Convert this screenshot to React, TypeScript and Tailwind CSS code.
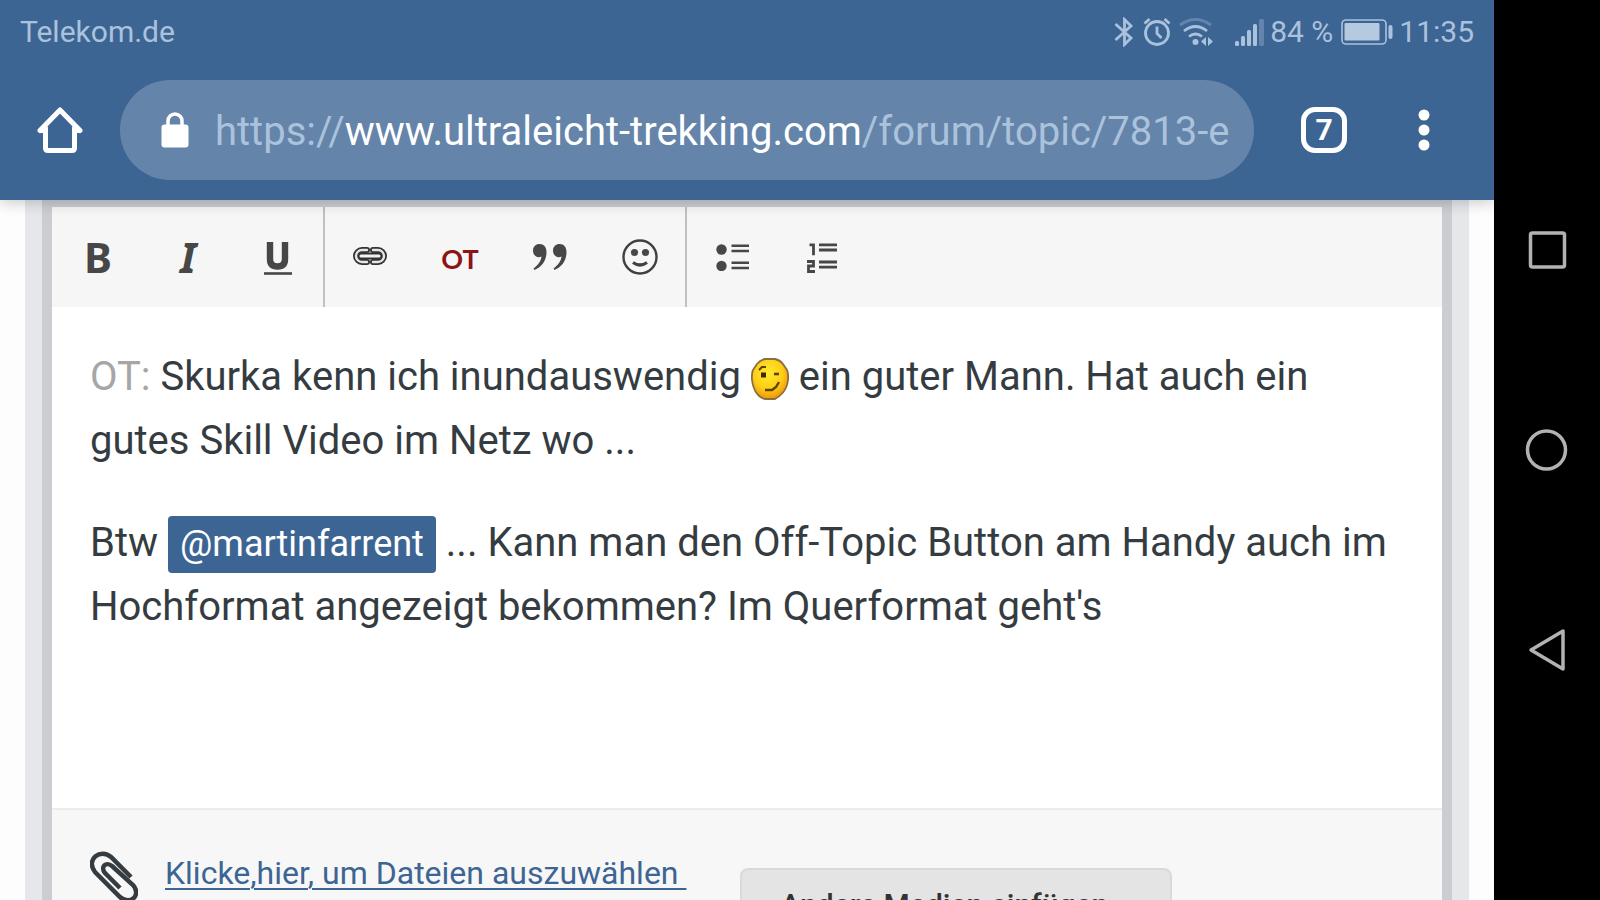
import type { ReactNode } from "react";

function StatusBar() {
  return (
    <div className="flex h-[62px] items-center justify-between px-5 pt-px text-[30px] leading-none text-[#abc2dc]">
      <span>Telekom.de</span>
      <div className="flex items-center">
        <svg width="20" height="30" viewBox="0 0 20 30" fill="none" stroke="currentColor" strokeWidth="2.8" aria-label="Bluetooth">
          <path d="M1.500 7 17 21 10.500 27.500V2.500L17 9 1.500 23" />
        </svg>
        <svg className="ml-2" width="30" height="30" viewBox="0 0 30 30" fill="none" stroke="currentColor" strokeWidth="2.8" aria-label="Wecker">
          <circle cx="15" cy="16" r="11.5" />
          <path d="M15 9.500v7l4.500 4.500M2.500 6.500 7.500 2M27.500 6.500 22.500 2" />
        </svg>
        <svg className="ml-1.5" width="36" height="30" viewBox="0 0 36 30" fill="none" stroke="currentColor" strokeWidth="2.8" aria-label="WLAN">
          <path d="M2 8q15.500-11 31 0" opacity=".35" />
          <path d="M6 14q11.500-9 23 0M11 19.500q6.500-5 13 0" />
          <circle cx="17.500" cy="25" r="3" fill="currentColor" stroke="none" />
          <path d="M28 20v9l-5-4.500zM30 20v9l5-4.500z" fill="currentColor" stroke="none" />
        </svg>
        <svg className="ml-5" width="30" height="28" viewBox="0 0 30 28" fill="currentColor" aria-label="Mobilfunk">
          <rect x="1" y="23" width="4" height="5" rx="1.5" />
          <rect x="7" y="18" width="4" height="10" rx="1.5" />
          <rect x="13" y="12" width="4" height="16" rx="1.5" />
          <rect x="19" y="6" width="4" height="22" rx="1.5" />
          <rect x="25" y="1" width="5" height="27" rx="1.5" opacity=".35" />
        </svg>
        <span className="ml-1.5">84 %</span>
        <svg className="ml-2" width="52" height="26" viewBox="0 0 52 26" fill="currentColor" aria-label="Akku">
          <rect x="1" y="1" width="44" height="24" rx="4" fill="none" stroke="currentColor" strokeWidth="1.6" />
          <rect x="3.500" y="4" width="35" height="17.500" rx="1" fill="#b5c9df" />
          <rect x="47.500" y="6" width="4" height="14" rx="2" />
        </svg>
        <span className="ml-1.5">11:35</span>
      </div>
    </div>
  );
}

function AddressBar() {
  return (
    <div className="flex items-center pb-5 pt-[18px]">
      <button type="button" aria-label="Startseite" className="flex w-[120px] justify-center text-white">
        <svg width="46" height="48" viewBox="0 0 46 48" fill="none" stroke="currentColor" strokeWidth="5" strokeLinejoin="round" strokeLinecap="round">
          <path d="M3 24.500 23 4 43 24.500M8.500 22v20q0 2.500 2.500 2.500h24q2.500 0 2.500-2.500V22M3.500 24.500h5M37.500 24.500h5" />
        </svg>
      </button>
      <button
        type="button"
        className="flex h-[100px] min-w-0 flex-1 items-center rounded-full bg-[#6484aa] pl-[41px] pr-6 text-left text-[40px] text-[#abc2dc]"
      >
        <svg className="shrink-0" width="28" height="36" viewBox="0 0 28 36" aria-label="Sichere Verbindung">
          <path d="M7 14V9a7 7 0 0 1 14 0v5" fill="none" stroke="white" strokeWidth="3.5" />
          <rect x="0.500" y="12.500" width="27" height="23" rx="3" fill="white" />
        </svg>
        <span className="ml-[26px] overflow-hidden whitespace-nowrap pt-1">
          https://<span className="text-white">www.ultraleicht-trekking.com</span>/forum/topic/7813-e
        </span>
      </button>
      <button type="button" aria-label="Tabs" className="flex w-[140px] justify-center">
        <span className="flex size-[46px] items-center justify-center rounded-[14px] border-[5px] border-white text-[30px] font-bold leading-none text-white">
          7
        </span>
      </button>
      <button type="button" aria-label="Menü" className="flex w-[100px] pl-[24px]">
        <svg width="12" height="42" viewBox="0 0 12 42" fill="white">
          <circle cx="6" cy="6" r="5.5" />
          <circle cx="6" cy="21" r="5.5" />
          <circle cx="6" cy="36" r="5.5" />
        </svg>
      </button>
    </div>
  );
}

function Tool({ label, children }: { label: string; children: ReactNode }) {
  return (
    <button type="button" aria-label={label} className="flex h-[100px] w-[90px] items-center justify-center text-[#474747]">
      {children}
    </button>
  );
}

function Toolbar() {
  return (
    <div role="toolbar" className="flex bg-[#f6f6f6] pl-px font-['Noto_Sans',sans-serif] text-[42px] font-bold leading-none">
      <div className="flex border-r-2 border-[#c0c0c0]">
        <Tool label="Fett">
          <span>B</span>
        </Tool>
        <Tool label="Kursiv">
          <span className="italic">I</span>
        </Tool>
        <Tool label="Unterstrichen">
          <svg width="28" height="36" viewBox="0 0 28 36" fill="none" stroke="currentColor">
            <path d="M6 3v17q0 7.500 7.500 7.500T21 20V3" strokeWidth="6.4" />
            <path d="M0 34.500h28" strokeWidth="2.6" />
          </svg>
        </Tool>
      </div>
      <div className="flex border-r-2 border-[#c0c0c0]">
        <Tool label="Link">
          <svg width="36" height="22" viewBox="0 0 36 22" fill="none">
            <g strokeLinecap="round">
              <path d="M15 4H10a6 6 0 0 0 0 12h5M21 4h5a6 6 0 0 1 0 12h-5" stroke="#343434" strokeWidth="6" />
              <path d="M10 10h16" stroke="#343434" strokeWidth="7" />
              <path d="M15 4H10a6 6 0 0 0 0 12h5M21 4h5a6 6 0 0 1 0 12h-5" stroke="#e6e6e6" strokeWidth="2.4" />
              <path d="M9 10h18" stroke="#f3f3f3" strokeWidth="3" />
            </g>
          </svg>
        </Tool>
        <Tool label="Off-Topic">
          <span className="pt-0.5 font-[Lato,sans-serif] text-[27px] font-bold text-[#8b1414]">OT</span>
        </Tool>
        <Tool label="Zitat">
          <svg width="36" height="26" viewBox="0 0 36 26" fill="currentColor">
            <path d="M1 6.500C1 2.500 4 0 7.500 0 12 0 14.500 3 14.500 8c0 9-5 15-12 18l-1-1.500C6 21 9 17.500 9.500 12.500 5 14.500 1 11.500 1 6.500z" />
            <path d="M21 6.500C21 2.500 24 0 27.500 0 32 0 34.500 3 34.500 8c0 9-5 15-12 18l-1-1.500C26 21 29 17.500 29.500 12.500 25 14.500 21 11.500 21 6.500z" />
          </svg>
        </Tool>
        <Tool label="Emoji">
          <svg width="36" height="36" viewBox="0 0 36 36">
            <circle cx="18" cy="18" r="16.5" fill="none" stroke="#404040" strokeWidth="2.4" />
            <circle cx="12.500" cy="13.500" r="3.6" fill="#474747" />
            <circle cx="23.500" cy="13.500" r="3.6" fill="#474747" />
            <path d="M11 23.500q7 5 14 0" fill="none" stroke="#404040" strokeWidth="3.2" />
          </svg>
        </Tool>
      </div>
      <div className="flex">
        <Tool label="Aufzählung">
          <svg width="34" height="28" viewBox="0 0 34 28" fill="currentColor">
            <circle cx="6.500" cy="6.500" r="5.2" />
            <circle cx="6.500" cy="23" r="5.2" />
            <path d="M16.500 1.500H34v2.600H16.500zM16.500 6.700H34v2.600H16.500zM16.500 18.500H34v2.600H16.500zM16.500 23.700H34v2.600H16.500z" />
          </svg>
        </Tool>
        <Tool label="Nummerierte Liste">
          <svg width="30" height="32" viewBox="0 0 30 32" fill="none" stroke="currentColor" strokeWidth="2.8">
            <path d="M2.500 3.800H6.500v10.500M0 20.500h6.500v4.500H1.500v5.500H8" />
            <path d="M12 3.800h18M12 9h18M12 21h18M12 26.200h18" />
          </svg>
        </Tool>
      </div>
    </div>
  );
}

function WinkSmiley() {
  return (
    <svg className="inline-block align-[-10px]" width="38" height="42" viewBox="0 0 38 42" role="img" aria-label=";-)">
      <defs>
        <radialGradient id="face" cx=".45" cy=".35" r=".65">
          <stop offset="0" stopColor="#ffe92e" />
          <stop offset=".6" stopColor="#ffcf17" />
          <stop offset="1" stopColor="#ee9709" />
        </radialGradient>
      </defs>
      <path d="M14 1h10q5 1 8 5l4 6q1.500 3 1 10-1 8-5 12.500T24 41H14q-5-1-8.500-6T1 22q-.5-7 1-10l4-6q3-4 8-5z" fill="url(#face)" stroke="#8a7040" strokeWidth="1.8" />
      <path d="M8 12l3-3h4" fill="none" stroke="#5b4300" strokeWidth="2" />
      <rect x="10" y="14.500" width="5" height="5" fill="#3e2d00" />
      <path d="M23 16h5" stroke="#5b4300" strokeWidth="2.6" />
      <path d="M14 32h7l4-3 3-5" fill="none" stroke="#5b4300" strokeWidth="2.4" />
    </svg>
  );
}

function Editor() {
  return (
    <div
      role="textbox"
      aria-multiline="true"
      aria-label="Beitrag"
      contentEditable
      suppressContentEditableWarning
      className="min-h-[501px] bg-white px-[38px] pt-[38px] text-[40px] leading-[64px] text-[#353c41] outline-none"
    >
      <p>
        <span className="text-[#a6a6a6]">OT:</span> Skurka kenn ich inundauswendig <WinkSmiley /> ein guter Mann. Hat auch ein
        gutes Skill Video im Netz wo ...
      </p>
      <p className="mt-[38px]">
        Btw{" "}
        <a href="#martinfarrent" className="inline-block rounded-[4px] bg-[#3d6594] px-3 text-[36px] leading-[57px] text-white">
          @martinfarrent
        </a>{" "}
        ... Kann man den Off-Topic Button am Handy auch im Hochformat angezeigt bekommen? Im Querformat geht's
      </p>
    </div>
  );
}

function Attachments() {
  return (
    <div className="flex flex-1 items-start border-t-2 border-[#ececec] bg-[#f7f7f7] pl-[38px]">
      <svg className="mt-10 shrink-0" width="48" height="54" viewBox="0 0 48 54" fill="none" stroke="#353c41" strokeWidth="4.5">
        <path d="M41 27 21 7C11-2-5 9 5 22L30 47C40 56 52 45 43 35L22 16C16 11 10 17 15 23L30 38" />
      </svg>
      <a
        href="#upload"
        className="mt-[43px] ml-[27px] whitespace-pre text-[32px] leading-[40px] text-[#3d6594] underline decoration-2 underline-offset-4"
      >
        {"Klicke,hier, um Dateien auszuwählen "}
      </a>
      <button
        type="button"
        className="mt-[58px] ml-[54px] flex items-center rounded-lg border-2 border-[#dadada] bg-[#e4e4e4] pb-4 pl-[38px] pr-[34px] pt-[15px] text-[30px] font-medium leading-[40px] text-[#333]"
      >
        Andere Medien einfügen
        <svg className="ml-3" width="16" height="10" viewBox="0 0 16 10" fill="currentColor">
          <path d="M0 0h16L8 10z" />
        </svg>
      </button>
    </div>
  );
}

function NavBar() {
  return (
    <nav className="flex w-[106px] shrink-0 flex-col items-center justify-center gap-[152px] bg-black text-[#b2b2b2]">
      <button type="button" aria-label="Letzte Apps">
        <svg width="48" height="48" viewBox="0 0 48 48" fill="none" stroke="currentColor" strokeWidth="3.5">
          <rect x="7.500" y="7" width="34" height="34" rx="2" />
        </svg>
      </button>
      <button type="button" aria-label="Home">
        <svg width="48" height="48" viewBox="0 0 48 48" fill="none" stroke="currentColor" strokeWidth="3.5">
          <circle cx="23.500" cy="24" r="19" />
        </svg>
      </button>
      <button type="button" aria-label="Zurück">
        <svg width="48" height="48" viewBox="0 0 48 48" fill="none" stroke="currentColor" strokeWidth="3.5" strokeLinejoin="round">
          <path d="M8 24 40 5v38z" />
        </svg>
      </button>
    </nav>
  );
}

export default function App() {
  return (
    <div className="flex h-screen overflow-hidden font-[Roboto,sans-serif]">
      <div className="flex min-w-0 flex-1 flex-col bg-[#fdfdfd]">
        <header className="relative z-10 bg-[#3d6594] shadow-[0_2px_14px_rgba(0,0,0,0.22)]">
          <StatusBar />
          <AddressBar />
        </header>
        <main className="flex min-h-0 flex-1 flex-col px-[25px]">
          <div className="flex min-h-0 flex-1 flex-col bg-[#e5e7eb] px-[17px]">
            <div className="flex min-h-0 flex-1 flex-col border-x-[10px] border-t-[7px] border-[#cbcdd1]">
              <Toolbar />
              <Editor />
              <Attachments />
            </div>
          </div>
        </main>
      </div>
      <NavBar />
    </div>
  );
}
